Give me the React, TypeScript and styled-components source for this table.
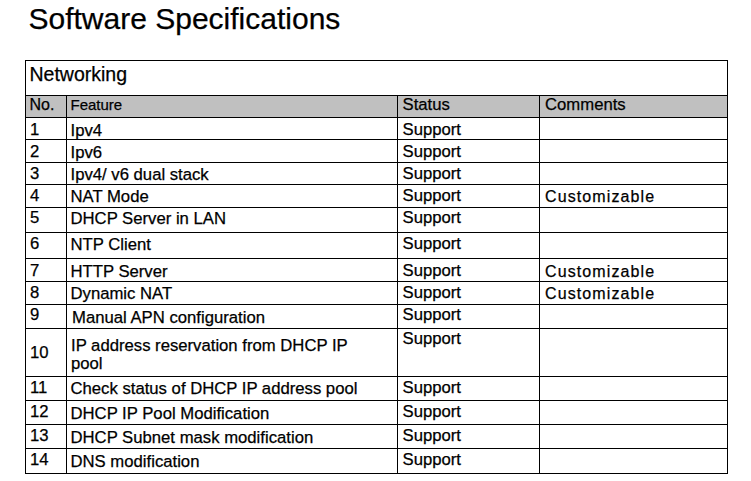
import React from "react";
import styled, { createGlobalStyle } from "styled-components";

const GlobalStyle = createGlobalStyle`
  html, body {
    margin: 0;
    padding: 0;
    background: #ffffff;
  }
  body {
    font-family: "Liberation Sans", Arial, sans-serif;
    color: #000000;
    -webkit-text-stroke: 0.25px #000000;
  }
`;

const Page = styled.div`
  width: 751px;
  height: 481px;
  box-sizing: border-box;
  padding: 2px 0 0 25px;
`;

const Title = styled.h1`
  margin: 0 0 24px 3.5px;
  font-size: 30px;
  font-weight: normal;
  line-height: 34px;
`;

const Table = styled.div`
  width: 703px;
  box-sizing: border-box;
  border: 1px solid #000000;
  border-bottom: none;
`;

const SectionRow = styled.div`
  height: 35px;
  box-sizing: border-box;
  border-bottom: 1px solid #000000;
  padding: 2px 0 0 3.5px;
  font-size: 19.5px;
  line-height: 23px;
`;

const Row = styled.div<{ $h: number; $head?: boolean }>`
  display: grid;
  grid-template-columns: 40px 331px 142px 188px;
  height: ${(p) => p.$h}px;
  box-sizing: border-box;
  border-bottom: 1px solid #000000;
  background: ${(p) => (p.$head ? "#c0c0c0" : "transparent")};
`;

const Cell = styled.div<{
  $pt?: number;
  $pl?: number;
  $size?: number;
  $spacing?: number;
  $middle?: boolean;
}>`
  display: flex;
  flex-direction: column;
  justify-content: ${(p) => (p.$middle ? "center" : "flex-start")};
  border-left: 1px solid #000000;
  box-sizing: border-box;
  padding: ${(p) => p.$pt ?? 2}px 0 0 ${(p) => p.$pl ?? 4}px;
  font-size: ${(p) => p.$size ?? 16.7}px;
  letter-spacing: ${(p) => p.$spacing ?? 0}px;
  line-height: 18px;
  white-space: nowrap;

  &:first-child {
    border-left: none;
  }
`;

type Spec = {
  n: string;
  f: React.ReactNode;
  c?: string;
  h: number;
  pt: number;
  fpt?: number;
  fpl?: number;
  spt?: number;
  mid?: boolean;
};

const rows: Spec[] = [
  { n: "1", f: "Ipv4", h: 22, pt: 3 },
  { n: "2", f: "Ipv6", h: 23, pt: 3 },
  { n: "3", f: "Ipv4/ v6 dual stack", h: 22, pt: 2 },
  { n: "4", f: "NAT Mode", c: "Customizable", h: 23, pt: 2 },
  { n: "5", f: "DHCP Server in LAN", h: 25, pt: 1 },
  { n: "6", f: "NTP Client", h: 26, pt: 2 },
  { n: "7", f: "HTTP Server", c: "Customizable", h: 23, pt: 3 },
  { n: "8", f: "Dynamic NAT", c: "Customizable", h: 23, pt: 2 },
  { n: "9", f: "Manual APN configuration", h: 24, pt: 1, fpt: 4, fpl: 5 },
  {
    n: "10",
    f: (
      <>
        IP address reservation from DHCP IP
        <br />
        pool
      </>
    ),
    h: 48,
    pt: 1,
    fpt: 8,
    fpl: 4,
    spt: 1,
    mid: true,
  },
  { n: "11", f: "Check status of DHCP IP address pool", h: 24, pt: 2, fpt: 3 },
  { n: "12", f: "DHCP IP Pool Modification", h: 24, pt: 2, fpt: 4 },
  { n: "13", f: "DHCP Subnet mask modification", h: 24, pt: 2, fpt: 4 },
  { n: "14", f: "DNS modification", h: 25, pt: 2, fpt: 4 },
];

export default function App() {
  return (
    <>
      <GlobalStyle />
      <Page>
        <Title>Software Specifications</Title>
        <Table>
          <SectionRow>Networking</SectionRow>
          <Row $h={22} $head>
            <Cell $pt={0} $pl={3.5} $size={16}>
              No.
            </Cell>
            <Cell $pt={0} $pl={3.5} $size={15}>
              Feature
            </Cell>
            <Cell $pt={0} $pl={4.5}>
              Status
            </Cell>
            <Cell $pt={0} $pl={5}>
              Comments
            </Cell>
          </Row>
          {rows.map((r) => (
            <Row key={r.n} $h={r.h}>
              <Cell $pt={r.mid ? 0 : r.pt} $middle={r.mid}>
                {r.n}
              </Cell>
              <Cell $pt={r.fpt ?? r.pt + 1} $pl={r.fpl ?? 3.5}>
                {r.f}
              </Cell>
              <Cell $pt={r.spt ?? r.pt} $pl={4.5}>
                Support
              </Cell>
              <Cell $pt={r.pt + 1} $pl={5} $size={16} $spacing={1.1}>
                {r.c ?? ""}
              </Cell>
            </Row>
          ))}
        </Table>
      </Page>
    </>
  );
}
